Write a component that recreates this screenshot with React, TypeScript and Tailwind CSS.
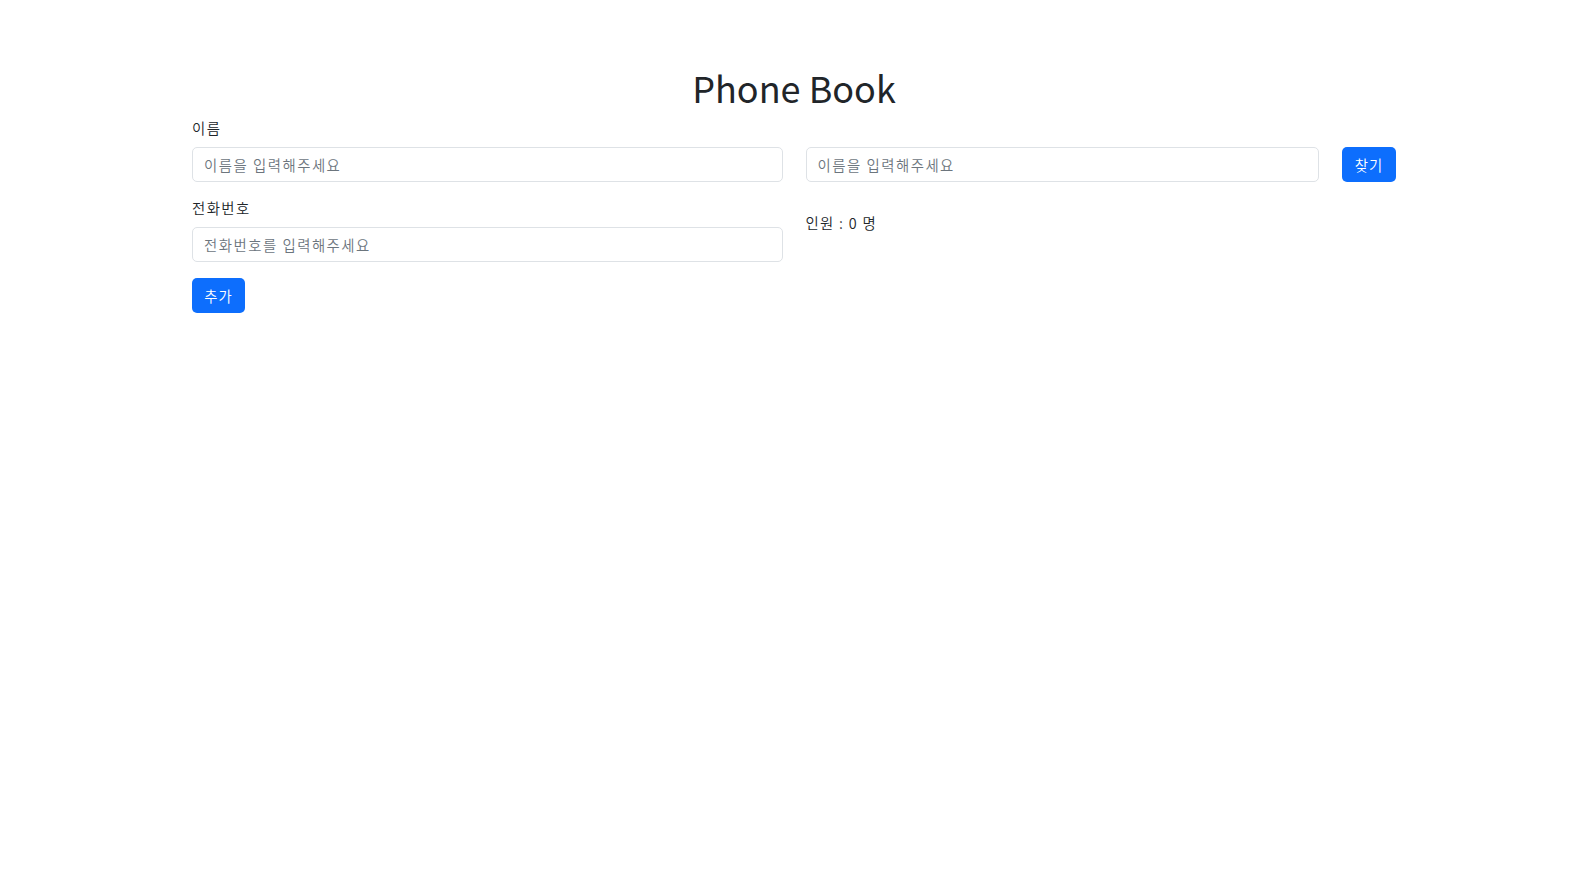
import React, { useState } from "react";

type Person = { name: string; phone: string };

export default function App() {
  const [name, setName] = useState<string>("");
  const [phone, setPhone] = useState<string>("");
  const [keyword, setKeyword] = useState<string>("");
  const [list, setList] = useState<Person[]>([]);

  const addPerson = () => {
    if (!name) return;
    setList([...list, { name, phone }]);
    setName("");
    setPhone("");
  };

  const found = list.filter((p) => p.name.includes(keyword));

  return (
    <div className="min-h-screen bg-white text-[#212529] font-['Malgun_Gothic','Noto_Sans_CJK_KR',sans-serif]">
      <div className="w-[1204px] mx-auto pt-[65px]">
        <h1 className="text-center text-[36px] leading-[44px] font-normal">Phone Book</h1>

        <div className="grid grid-cols-2 gap-x-[23px] mt-[8px]">
          {/* left: add form */}
          <div className="flex flex-col">
            <label className="text-[14.4px] leading-[22px] mb-[8px] tracking-[1.4px] font-[350]">이름</label>
            <input
              value={name}
              onChange={(e) => setName(e.target.value)}
              placeholder="이름을 입력해주세요"
              className="h-[35px] px-[11px] text-[14.4px] tracking-[1.5px] font-[350] border border-[#dee2e6] rounded-[5px] outline-none placeholder:text-[#6c757d]"
            />
            <label className="text-[14.4px] leading-[22px] mt-[15px] mb-[8px] tracking-[1.4px] font-[350]">전화번호</label>
            <input
              value={phone}
              onChange={(e) => setPhone(e.target.value)}
              placeholder="전화번호를 입력해주세요"
              className="h-[35px] px-[11px] text-[14.4px] tracking-[1.5px] font-[350] border border-[#dee2e6] rounded-[5px] outline-none placeholder:text-[#6c757d]"
            />
            <div className="mt-[16px]">
              <button
                onClick={addPerson}
                className="h-[35px] w-[53px] bg-[#0d6efd] text-white text-[14.4px] tracking-[1px] font-[350] rounded-[5px]"
              >
                추가
              </button>
            </div>
          </div>

          {/* right: search */}
          <div className="flex flex-col">
            <div className="flex items-center pt-[30px]">
              <input
                value={keyword}
                onChange={(e) => setKeyword(e.target.value)}
                placeholder="이름을 입력해주세요"
                className="flex-1 h-[35px] px-[11px] text-[14.4px] tracking-[1.5px] font-[350] border border-[#dee2e6] rounded-[5px] outline-none placeholder:text-[#6c757d]"
              />
              <button className="ml-[23px] h-[35px] w-[54px] bg-[#0d6efd] text-white text-[14.4px] tracking-[1px] font-[350] rounded-[5px]">
                찾기
              </button>
            </div>
            <p className="mt-[30px] text-[14.4px] leading-[22px] tracking-[1.3px] font-[350]">인원 : {found.length} 명</p>
            {found.map((p, i) => (
              <div key={i} className="text-[14.4px] leading-[22px] font-[350]">
                {p.name} {p.phone}
              </div>
            ))}
          </div>
        </div>
      </div>
    </div>
  );
}
